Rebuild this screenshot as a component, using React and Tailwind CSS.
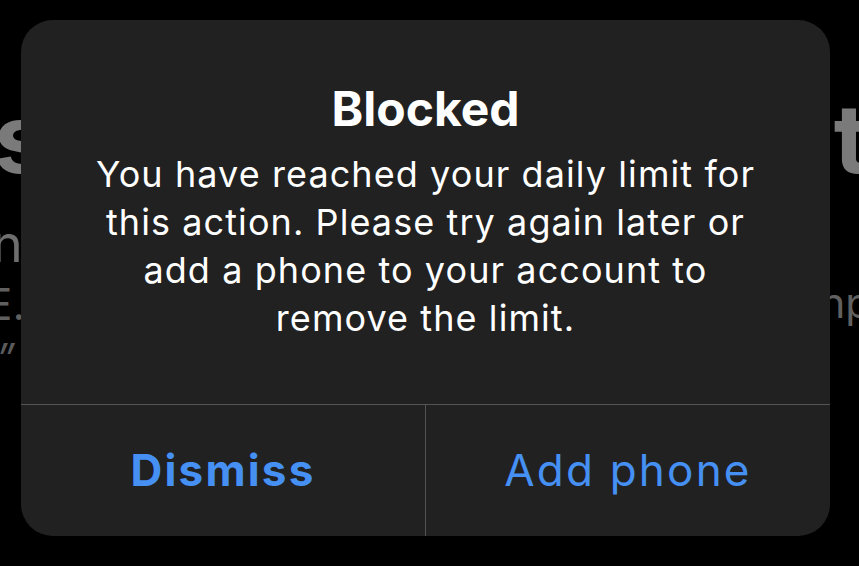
export default function App() {
  return (
    <div className="relative h-[566px] w-[859px] overflow-hidden bg-black font-['Inter',sans-serif]">
      {/* page behind the alert */}
      <div className="pt-[90px] text-[#7a7a7a]">
        <div className="flex justify-between text-[96px] font-bold leading-none">
          <span className="-ml-[6px]">s</span>
          <span className="-mr-[10px]">t</span>
        </div>
        <div className="mt-[32px] text-[52px] leading-none text-[#6e6e6e]">
          <span className="-ml-[8px]">n</span>
        </div>
        <div className="mt-[12px] flex justify-between text-[44px] leading-none text-[#606060]">
          <span className="-ml-[14px]">E.</span>
          <span className="-mr-[12px] text-[42px]">np</span>
        </div>
        <div className="mt-[12px] text-[40px] leading-none text-[#5a5a5a]">
          <span className="-ml-[4px] italic">”</span>
        </div>
      </div>

      {/* alert */}
      <div className="absolute left-[21px] top-[20px] flex h-[516px] w-[809px] flex-col rounded-[32px] bg-[#212121] text-center">
        <div className="flex-1 px-4 pt-[65px]">
          <h1 className="text-[48px] font-bold leading-[48px] text-white">Blocked</h1>
          <p className="mt-[17px] text-[36px] leading-[48px] tracking-[0.03em] text-white">
            You have reached your daily limit for
            <br />
            this action. Please try again later or
            <br />
            add a phone to your account to
            <br />
            remove the limit.
          </p>
        </div>
        <div className="flex h-[132px] border-t border-[#545454]">
          <button className="flex-1 border-r border-[#545454] pb-[2px] text-[44px] font-bold tracking-[0.05em] text-[#4590f2]">
            Dismiss
          </button>
          <button className="flex-1 pb-[2px] text-[44px] tracking-[0.05em] text-[#4590f2]">Add phone</button>
        </div>
      </div>
    </div>
  );
}
